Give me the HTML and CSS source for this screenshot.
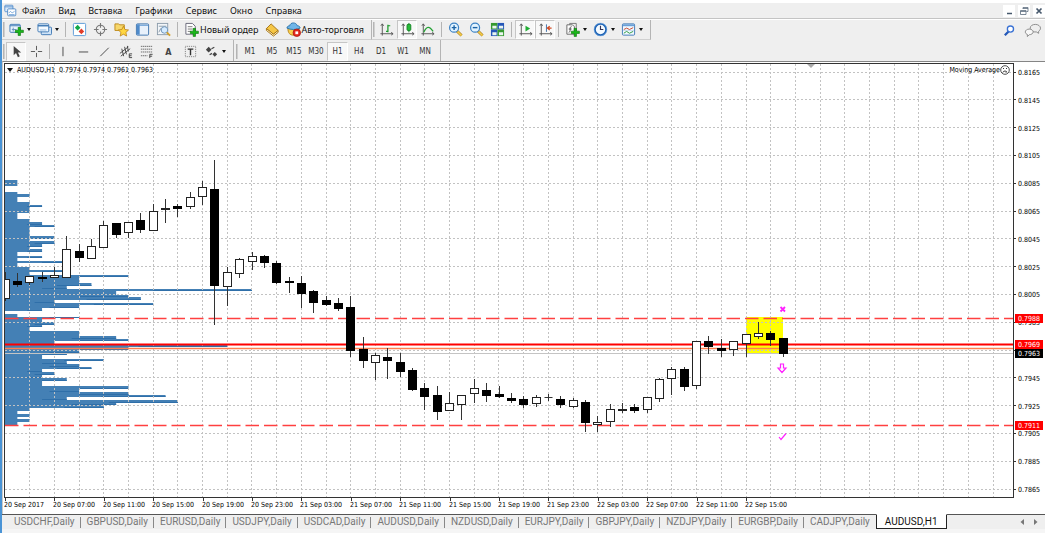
FILE: index.html
```html
<!DOCTYPE html>
<html lang="ru">
<head>
<meta charset="utf-8">
<title>AUDUSD,H1</title>
<link rel="stylesheet" href="styles.css">
</head>
<body>
<svg class="sprite" aria-hidden="true">
  <symbol id="plus" viewBox="0 0 16 16"><path d="M6 1h4v5h5v4h-5v5H6v-5H1V6h5z" fill="#18b818" stroke="#087008"/></symbol>
  <symbol id="i-app" viewBox="0 0 16 16"><rect x="1" y="1.500" width="10" height="8" rx="1" fill="#dcebfa" stroke="#4a86c8"/><path d="M1 3.500h10" stroke="#4a86c8"/><rect x="4.500" y="6" width="10" height="8.500" rx="1" fill="#fff" stroke="#3f7cc0"/><path d="M6 11l2-2 2 2 3-2M6 13h7" stroke="#6a9fd6" fill="none"/></symbol>
  <symbol id="i-newchart" viewBox="0 0 16 16"><rect x="1" y="2.500" width="11" height="8.500" rx="1" fill="#e8f3fd" stroke="#3d78b4"/><path d="M1 4h11" stroke="#3d78b4"/><path d="M3 8h5M4.500 6v4" stroke="#6b93bd"/><use href="#plus" x="6" y="5" width="10" height="10"/></symbol>
  <symbol id="i-profiles" viewBox="0 0 16 16"><rect x="4.500" y="5.500" width="11" height="8" rx="1" fill="#cfe3f7" stroke="#3d78b4"/><rect x="1" y="2" width="11.500" height="8.500" rx="1" fill="#f4faff" stroke="#3d78b4"/><path d="M1 4h11.500" stroke="#3d78b4" stroke-width="1.500"/><path d="M3 8.500h7" stroke="#8db6de"/></symbol>
  <symbol id="i-market" viewBox="0 0 16 16"><rect x="1.500" y="1.500" width="13" height="13" rx="1" fill="#fff" stroke="#5a9bd8"/><path d="M6 3l3 3-3 3-3-3z" fill="#12a84a"/><path d="M10 7l3 3-3 3-3-3z" fill="#e23c28"/></symbol>
  <symbol id="i-target" viewBox="0 0 16 16"><circle cx="8" cy="8" r="4.500" fill="none" stroke="#777" stroke-width="1.200"/><path d="M8 1v5M8 10v5M1 8h5M10 8h5" stroke="#777" stroke-width="1.200"/></symbol>
  <symbol id="i-nav" viewBox="0 0 16 16"><path d="M1 2h4l1 1h5v6H1z" fill="#f6d76b" stroke="#bd8a1c"/><path d="M10 4.500l1.700 3.500 3.800.5-2.800 2.600.8 3.900-3.500-2-3.400 2 .8-3.900-2.800-2.600 3.800-.5z" fill="#ffd640" stroke="#b87e14" stroke-width=".8"/></symbol>
  <symbol id="i-term" viewBox="0 0 16 16"><rect x="1.500" y="2" width="13" height="12" rx="1" fill="#e8f1fb" stroke="#3e74ae"/><rect x="2" y="2.500" width="3" height="11" fill="#4f8bcb"/><path d="M2 3.500h12" stroke="#5a94d0"/></symbol>
  <symbol id="i-tester" viewBox="0 0 16 16"><rect x="1.500" y="1.500" width="11" height="12" fill="#f3f6f9" stroke="#8c9cab"/><path d="M3 4.500h8M3 11l2-4 2 4" stroke="#8c9cab" fill="none"/><circle cx="9" cy="8.500" r="3.500" fill="#d5ebff" stroke="#6f94ba"/><path d="M11.500 11l3.500 3.500" stroke="#d2a02c" stroke-width="2"/></symbol>
  <symbol id="i-order" viewBox="0 0 16 16"><path d="M2 1.500h7l3 3V13H2z" fill="#fff" stroke="#667"/><path d="M4 5h5M4 7.500h5M4 10h4" stroke="#777"/><use href="#plus" x="6" y="6" width="10" height="10"/></symbol>
  <symbol id="i-meta" viewBox="0 0 16 16"><path d="M6.500 2L14 9l-5 4-7.500-6z" fill="#f5c646" stroke="#a4710f"/><path d="M1.500 7v2L9 15l5-4V9l-5 4z" fill="#fff3cd" stroke="#a4710f"/></symbol>
  <symbol id="i-auto" viewBox="0 0 16 16"><path d="M2 6c0 6 2 8 6 8s6-2 6-8z" fill="#f7cf50" stroke="#b98318"/><path d="M1 6.500C1 4.500 3 4 4 4c.5-4 7-4 8 0 2 0 3 1 3 2.500-4 2-10 2-14 0z" fill="#6fb5e8" stroke="#2a72ad"/><circle cx="11.500" cy="11.500" r="4" fill="#e3281c" stroke="#a81510" stroke-width=".8"/><rect x="10" y="10" width="3" height="3" fill="#fff"/></symbol>
  <symbol id="axes" viewBox="0 0 16 16"><path d="M3.500 2v12.500M1.500 12.500H15M2 4l1.500-2L5 4M13 11l2 1.500-2 1.500" fill="none" stroke="#555"/></symbol>
  <symbol id="i-bars" viewBox="0 0 16 16"><use href="#axes"/><path d="M9.500 3v8M7.500 10h2M9.500 4h2.500" stroke="#189a28" stroke-width="1.300"/></symbol>
  <symbol id="i-candles" viewBox="0 0 16 16"><use href="#axes"/><path d="M9.500 1v10" stroke="#148224"/><rect x="7.500" y="2.500" width="4" height="6.500" rx="1" fill="#26bd38" stroke="#148224"/></symbol>
  <symbol id="i-line" viewBox="0 0 16 16"><use href="#axes"/><path d="M4 11c3-7 6-7 10-1" fill="none" stroke="#22a032" stroke-width="1.300"/></symbol>
  <symbol id="lens" viewBox="0 0 16 16"><path d="M9.500 9.500l5 5" stroke="#a97918" stroke-width="3"/><path d="M10 10l4.500 4.500" stroke="#f3cc4b" stroke-width="1.700"/><circle cx="6.500" cy="6" r="4.800" fill="#e1f3ff" stroke="#3c82c4" stroke-width="1.300"/></symbol>
  <symbol id="i-zin" viewBox="0 0 16 16"><use href="#lens"/><path d="M4 6h5M6.500 3.500v5" stroke="#1b62a5" stroke-width="1.500"/></symbol>
  <symbol id="i-zout" viewBox="0 0 16 16"><use href="#lens"/><path d="M4 6h5" stroke="#1b62a5" stroke-width="1.500"/></symbol>
  <symbol id="i-tile" viewBox="0 0 16 16"><rect x="1" y="1" width="7" height="7" fill="#35992e"/><rect x="8" y="1" width="7" height="7" fill="#2456b8"/><rect x="1" y="8" width="7" height="7" fill="#2456b8"/><rect x="8" y="8" width="7" height="7" fill="#35992e"/><path d="M2.500 4H7v3H2.500zM9.500 4H14v3H9.500zM2.500 11H7v3H2.500zM9.500 11H14v3H9.500z" fill="#e9f5ef"/></symbol>
  <symbol id="i-scroll" viewBox="0 0 16 16"><use href="#axes"/><path d="M8 4l5 3-5 3z" fill="#20ae34"/></symbol>
  <symbol id="i-shift" viewBox="0 0 16 16"><use href="#axes"/><path d="M9 2.500v8" stroke="#3b6ea8"/><path d="M14.500 6.500H11M12.500 4.500l-2.500 2 2.500 2" fill="none" stroke="#d24a22" stroke-width="1.300"/></symbol>
  <symbol id="i-ind" viewBox="0 0 16 16"><path d="M5 1.500h7v8H5z" fill="#eee" stroke="#777"/><path d="M2 3h6l2 2v8H2z" fill="#fff" stroke="#666"/><path d="M7 5c-1.500 0-1.500 1-1.500 3S5 11 4 11M4 7.500h3" fill="none" stroke="#444"/><use href="#plus" x="6" y="6" width="10" height="10"/></symbol>
  <symbol id="i-clock" viewBox="0 0 16 16"><circle cx="8" cy="8" r="6" fill="#f4faff" stroke="#1f63b4" stroke-width="2"/><circle cx="8" cy="8" r="6.800" fill="none" stroke="#7db1e8" stroke-width=".6"/><path d="M8 4v4h3" fill="none" stroke="#335" stroke-width="1.200"/></symbol>
  <symbol id="i-tpl" viewBox="0 0 16 16"><rect x="1.500" y="2" width="13" height="12" rx="1" fill="#f1f8ff" stroke="#3e78b6"/><path d="M2 3.500h12" stroke="#6aa0d8" stroke-width="2"/><path d="M3 8l3-1.500L9 8l4-2" fill="none" stroke="#c8452c"/><path d="M3 12l3-2 3 2 4-2" fill="none" stroke="#299a3c"/><path d="M2 9h12" stroke="#a5c4e2" stroke-width=".5"/></symbol>
  <symbol id="i-search" viewBox="0 0 16 16"><path d="M7 9l-4 4" stroke="#2458b8" stroke-width="2.400"/><circle cx="9" cy="6.500" r="3.300" fill="#fff" stroke="#3a72d4" stroke-width="1.400"/></symbol>
  <symbol id="i-chat" viewBox="0 0 18 16"><path d="M11.500 1.500c3 0 5.500 1.800 5.500 4 0 1.500-1 2.700-2 3.300V11l-2.500-1.500c-4 .5-6.500-1.500-6.500-4s2.500-4 5.500-4z" fill="#eee" stroke="#888"/><path d="M5 6.500c2.300 0 4.200 1.300 4.200 3s-2 3-4.200 3L3 14.500v-2.300c-1.200-.4-2.200-1.300-2.200-2.700 0-1.700 1.900-3 4.200-3z" fill="#f7f7f7" stroke="#888"/></symbol>
  <symbol id="i-cursor" viewBox="0 0 16 16"><path d="M5 2v10l2.500-2.500L9.500 14l2-1-2-4H13z" fill="#444"/></symbol>
  <symbol id="i-cross" viewBox="0 0 16 16"><path d="M8 2v4.500M8 9.500V14M2 8h4.500M9.500 8H14" stroke="#555"/></symbol>
  <symbol id="i-v" viewBox="0 0 16 16"><path d="M8.500 3v10" stroke="#444"/></symbol>
  <symbol id="i-h" viewBox="0 0 16 16"><path d="M3 8.500h10" stroke="#444"/></symbol>
  <symbol id="i-t" viewBox="0 0 16 16"><path d="M3.500 13l9-9" stroke="#444"/></symbol>
  <symbol id="i-chan" viewBox="0 0 16 16"><path d="M2 10l9-7M3 13l10-8M4 5l2 8M7 3l2 8M10 2l1 6" stroke="#444" fill="none"/><path d="M15 10.500h-3v4h3M12 12.500h2.500" fill="none" stroke="#333" stroke-width=".9"/></symbol>
  <symbol id="i-fib" viewBox="0 0 16 16"><path d="M2 2.500h12M2 5.500h12M2 8.500h12M2 12.500h7" stroke="#666" stroke-dasharray="1.500 .6"/><path d="M14.500 11h-3v4M11.500 13H14" fill="none" stroke="#333" stroke-width=".9"/></symbol>
  <symbol id="i-label" viewBox="0 0 16 16"><rect x="2.500" y="2.500" width="11" height="11" fill="none" stroke="#777" stroke-dasharray="1 1"/><path d="M5 5.500h6M8 5v7" stroke="#333" stroke-width="1.500"/></symbol>
  <symbol id="i-arrows" viewBox="0 0 16 16"><path d="M5 3l3 3-3 3-3-3z" fill="#444"/><path d="M11.500 8.500l2.500 2.500-2.500 2.500L9 11z" fill="#444"/><path d="M8 5l3-1.500M6 11.500L8.500 10" stroke="#444" stroke-width="1.300"/></symbol>
</svg>

<div class="terminal">
  <nav class="menu">
    <svg class="icon small"><use href="#i-app"/></svg>
    <button>Файл</button><button>Вид</button><button>Вставка</button><button>Графики</button><button>Сервис</button><button>Окно</button><button>Справка</button>
    <div class="window-controls">
      <button aria-label="Свернуть"><svg viewBox="0 0 12 12"><path d="M4 8.500h5" stroke="#46586c" stroke-width="1.500"/></svg></button>
      <button aria-label="Восстановить"><svg viewBox="0 0 12 12"><path d="M5 4V2.500h5v4H8.500M5 3.500h5M2.500 5.500h5.500v4H2.500zM2.500 6.500h5.500" fill="none" stroke="#5c6c7e" stroke-width=".8"/></svg></button>
      <button aria-label="Закрыть"><svg viewBox="0 0 12 12"><path d="M3.500 3.500l5 5M8.500 3.500l-5 5" stroke="#46586c" stroke-width="1.700"/></svg></button>
    </div>
  </nav>

  <div class="toolbar">
    <div class="group">
      <i class="grip"></i>
      <button class="drop" aria-label="Новый график"><svg class="icon"><use href="#i-newchart"/></svg></button>
      <button class="drop" aria-label="Профили"><svg class="icon"><use href="#i-profiles"/></svg></button>
      <i class="sep"></i>
      <button aria-label="Обзор рынка"><svg class="icon"><use href="#i-market"/></svg></button>
      <button aria-label="Окно данных"><svg class="icon"><use href="#i-target"/></svg></button>
      <button aria-label="Навигатор"><svg class="icon"><use href="#i-nav"/></svg></button>
      <button aria-label="Терминал"><svg class="icon"><use href="#i-term"/></svg></button>
      <button aria-label="Тестер"><svg class="icon"><use href="#i-tester"/></svg></button>
      <i class="sep"></i>
      <button class="text"><svg class="icon"><use href="#i-order"/></svg>Новый ордер</button>
      <button aria-label="Редактор"><svg class="icon"><use href="#i-meta"/></svg></button>
      <button class="text"><svg class="icon"><use href="#i-auto"/></svg>Авто-торговля</button>
    </div>
    <div class="group">
      <i class="grip"></i>
      <button aria-label="Бары"><svg class="icon"><use href="#i-bars"/></svg></button>
      <button class="pressed" aria-label="Свечи"><svg class="icon"><use href="#i-candles"/></svg></button>
      <button aria-label="Линия"><svg class="icon"><use href="#i-line"/></svg></button>
      <i class="sep"></i>
      <button aria-label="Увеличить"><svg class="icon"><use href="#i-zin"/></svg></button>
      <button aria-label="Уменьшить"><svg class="icon"><use href="#i-zout"/></svg></button>
      <button aria-label="Окна мозаикой"><svg class="icon"><use href="#i-tile"/></svg></button>
      <i class="sep"></i>
      <button class="pressed" aria-label="Автопрокрутка"><svg class="icon"><use href="#i-scroll"/></svg></button>
      <button class="pressed" aria-label="Сдвиг графика"><svg class="icon"><use href="#i-shift"/></svg></button>
      <i class="sep"></i>
      <button class="drop" aria-label="Индикаторы"><svg class="icon"><use href="#i-ind"/></svg></button>
      <button class="drop" aria-label="Периоды"><svg class="icon"><use href="#i-clock"/></svg></button>
      <button class="drop" aria-label="Шаблоны"><svg class="icon"><use href="#i-tpl"/></svg></button>
    </div>
    <div class="tools-right">
      <button aria-label="Поиск"><svg class="icon"><use href="#i-search"/></svg></button>
      <button aria-label="Чат"><svg class="icon wide"><use href="#i-chat"/></svg></button>
    </div>
  </div>

  <div class="toolbar drawing">
    <div class="group">
      <i class="grip"></i>
      <button class="pressed" aria-label="Курсор"><svg class="icon"><use href="#i-cursor"/></svg></button>
      <button aria-label="Перекрестие"><svg class="icon"><use href="#i-cross"/></svg></button>
      <i class="sep"></i>
      <button aria-label="Вертикальная линия"><svg class="icon"><use href="#i-v"/></svg></button>
      <button aria-label="Горизонтальная линия"><svg class="icon"><use href="#i-h"/></svg></button>
      <button aria-label="Трендовая линия"><svg class="icon"><use href="#i-t"/></svg></button>
      <button aria-label="Канал"><svg class="icon"><use href="#i-chan"/></svg></button>
      <button aria-label="Фибоначчи"><svg class="icon"><use href="#i-fib"/></svg></button>
      <button class="letter">A</button>
      <button aria-label="Метка"><svg class="icon"><use href="#i-label"/></svg></button>
      <button class="drop" aria-label="Стрелки"><svg class="icon"><use href="#i-arrows"/></svg></button>
    </div>
    <div class="group periods">
      <i class="grip"></i>
      <button>M1</button><button>M5</button><button>M15</button><button>M30</button><button class="pressed">H1</button><button>H4</button><button>D1</button><button>W1</button><button>MN</button>
    </div>
  </div>

  <main class="chart">
    <div class="plot">
      <svg id="plot"></svg>
      <div class="legend">
        <span><i class="caret"></i>AUDUSD,H1&nbsp; 0.7974 0.7974 0.7961 0.7963</span>
        <span>Moving Average<svg class="face" viewBox="0 0 10 10"><circle cx="5" cy="5" r="4.300" fill="none" stroke="#222" stroke-width=".8"/><path d="M3 3.500h1M6 3.500h1M3 7.200c1-1.600 3-1.600 4 0" fill="none" stroke="#222" stroke-width=".9"/></svg></span>
      </div>
    </div>
    <svg id="prices"></svg>
    <svg id="times"></svg>
  </main>

  <footer class="tabs">
    <button>USDCHF,Daily</button><button>GBPUSD,Daily</button><button>EURUSD,Daily</button><button>USDJPY,Daily</button><button>USDCAD,Daily</button><button>AUDUSD,Daily</button><button>NZDUSD,Daily</button><button>EURJPY,Daily</button><button>GBPJPY,Daily</button><button>NZDJPY,Daily</button><button>EURGBP,Daily</button><button class="last">CADJPY,Daily</button><button class="active">AUDUSD,H1</button>
    <div class="tab-nav">
      <button aria-label="Назад"><svg viewBox="0 0 6 8"><path d="M5 1v6L1.500 4z" fill="#777"/></svg></button>
      <button aria-label="Вперёд"><svg viewBox="0 0 6 8"><path d="M1 1v6l3.500-3z" fill="#777"/></svg></button>
    </div>
  </footer>
</div>
<script src="chart.js"></script>
</body>
</html>
```
FILE: styles.css
```css
* { box-sizing: border-box; }
body {
  margin: 0;
  color: #111;
  font: 9px/12px "DejaVu Sans Condensed", "Noto Sans", sans-serif;
}
button {
  display: flex;
  align-items: center;
  justify-content: center;
  padding: 0;
  border: 0;
  background: none;
  color: inherit;
  font: inherit;
  white-space: nowrap;
}
.sprite { position: absolute; width: 0; height: 0; }
.icon { width: 15px; height: 15px; flex: none; }
.icon.small { width: 13px; height: 13px; }
.icon.wide { width: 18px; }

.terminal {
  display: flex;
  flex-direction: column;
  min-height: 100vh;
  padding-top: 3px;
  border-left: 2px solid #4a94d6;
  background: linear-gradient(#fff 520px, #f5f5f5 520px);
}

.menu {
  display: flex;
  align-items: center;
  gap: 13px;
  height: 16px;
  padding-left: 2px;
  background: #efefef;
  border-bottom: 1px solid #c4c4c4;
  font-family: "Noto Sans", sans-serif;
}
.menu .icon { margin-right: -8px; }
.window-controls { display: flex; gap: 3px; margin-left: auto; }
.window-controls button { width: 12px; height: 12px; background: #fff; }
.window-controls svg { width: 12px; height: 12px; }

.toolbar {
  display: flex;
  height: 20px;
  margin-top: 1px;
  background: #efefef;
}
.toolbar.drawing { margin-top: 0; height: 21px; }
.group {
  display: flex;
  align-items: center;
  padding-right: 4px;
  border-right: 1px solid #b4b4b4;
  border-bottom: 1px solid #d0d0d0;
}
.group button { width: 21px; height: 19px; }
.group .drop { width: 28px; gap: 3px; }
.drop::after, .caret {
  content: "";
  border: solid transparent;
  border-width: 3px 2px 0;
  border-top-color: #111;
}
.group .text { width: auto; margin: 0 3px; gap: 1px; font-family: "Noto Sans", sans-serif; }
.group .pressed { width: 20px; background: #f8f8f8; border: 1px solid #c6c6c6; border-right-color: #fff; border-bottom-color: #fff; }
.group .letter { width: 23px; font-weight: bold; color: #444; }
.grip { width: 2px; height: 15px; margin: 0 1px; border-left: 1px solid #b4b4b4; border-right: 1px solid #d0d0d0; }
.sep { width: 1px; height: 15px; margin: 0 3px; background: #b4b4b4; }
.drawing .group { padding-top: 2px; border-bottom: 0; }
.drawing .sep { margin: 0 2px; }
.drawing .periods { margin-left: 1px; font-size: 8px; color: #333; }
.periods button { width: 22px; padding-top: 1px; }
.periods .pressed { width: 21px; }
.tools-right { display: flex; gap: 7px; margin-left: auto; padding-right: 3px; }

.chart {
  display: grid;
  grid-template: auto 16px / 1fr 31px;
  padding-left: 2px;
  padding-top: 1px;
  border-top: 1px solid #858585;
  border-left: 1px solid #c9c9c9;
  color: #000;
  font-size: 7px;
}
.chart svg { display: block; }
.plot { position: relative; margin-left: -1px; border: 1px solid #333; }
#plot { width: 100%; height: 433px; }
#prices { width: 31px; height: 435px; }
#times { grid-column: 1 / -1; width: 100%; height: 16px; overflow: visible; }
.legend {
  position: absolute;
  inset: 0 3px auto 2px;
  display: flex;
  justify-content: space-between;
  line-height: 12px;
}
.legend span { display: flex; align-items: center; }
.legend .caret { margin-right: 4px; border-width: 4px 3px 0; }
.face { width: 10px; height: 10px; }

.histogram { fill: #4480b5; }
.histogram .edge { fill: #2f6fa9; }
.grid { stroke: #c2c2c2; stroke-dasharray: 2 2; }
.level { stroke: #ff4040; stroke-dasharray: 13.5 5; stroke-width: 1.3; }
.base { stroke: #ff0000; stroke-width: 1.8; }
.mid { stroke: #ff7f50; stroke-width: 1.5; }
.bid { stroke: #c4c4c4; }
.zone { fill: #ffff00; }
.wick { stroke: #333; }
.up { fill: #fff; stroke: #222; }
.down { fill: #000; stroke: #000; }
.mark { fill: none; stroke: #ff20ff; stroke-width: 1.2; }
.mark.bold { stroke-width: 1.8; }
.axis { fill: #000; }
.tick { stroke: #333; }
.tag { fill: #ff0000; }
.tag.current { fill: #000; }
.tag-text { fill: #fff; }

.tabs {
  display: flex;
  align-items: center;
  height: 15px;
  padding-left: 6px;
  background: #efefef;
  border-top: 1px solid #555;
  color: #777;
  font: 10px/12px Roboto, "Noto Sans", sans-serif;
}
.tabs > button { padding: 0 5px 0 6px; border-right: 1px solid #888; height: 11px; }
.tabs > .last { border-right-color: transparent; }
.tabs > .active {
  height: 15px;
  margin-top: -1px;
  padding: 0 8px;
  background: #fff;
  border: 1px solid #222;
  border-top-color: #fff;
  color: #111;
}
.tab-nav { display: flex; gap: 8px; margin-left: auto; padding-right: 6px; }
.tab-nav svg { width: 6px; height: 8px; }
```
FILE: chart.js
```js
const NS = "http://www.w3.org/2000/svg";
const STEP = 12.35;
const FIRST_X = 5;
const TOP_PRICE_Y = 72;
const ROW = 27.8;

function add(parent, tag, attrs, text) {
  const el = document.createElementNS(NS, tag);
  for (const key in attrs) el.setAttribute(key, attrs[key]);
  if (text) el.textContent = text;
  parent.appendChild(el);
  return el;
}

// [top, bottom, length in bars]
const volumes = [
  [180,186,1],[192,194,1],[194,197,2],[197,202,1],[202,205,2],[205,207,3],[207,213,2],[213,219,1],
  [219,222,2],[222,225,3],[225,227,4],[227,236,2],[236,239,4],[239,241,2],[241,244,4],[244,247,3],
  [247,249,2],[249,252,3],[252,256,1],[256,258,3],[258,261,1],[261,263,5],[263,267,1],[267,270,2],
  [270,272,5],[272,275,2],[275,277,10],[277,283,6],[283,286,7],[286,289,5],[289,291,20],[291,295,9],
  [295,297,10],[297,300,11],[300,303,4],[303,305,12],[305,308,6],[308,311,3],[314,317,1],[317,318,6],
  [318,322,3],[322,325,4],[325,327,3],[327,331,2],[331,336,6],[336,339,9],[339,341,10],[341,345,4],
  [345,347,18],[347,350,10],[350,353,6],[353,355,5],[355,359,3],[359,361,8],[361,364,5],[364,367,6],
  [367,369,7],[369,372,3],[372,375,4],[375,378,3],[378,381,5],[381,386,3],[386,389,10],[389,392,6],
  [392,395,10],[395,397,13],[397,400,5],[400,403,14],[403,405,9],[405,408,8],[408,411,2],[411,414,1],
  [414,417,2],[417,419,1],[419,422,2],[422,425,1]
];

// [high, low, body top, body bottom, is down]
const candles = [
  [272,300,279,298,0],[273,286,281,284,1],[276,284,276,282,0],[272,281,277,278,1],[267,277,275,277,0],
  [236,277,249,277,0],[244,261,251,257,1],[239,258,246,258,0],[221,247,225,247,0],[223,237,223,234,1],
  [222,237,222,232,0],[213,232,220,229,1],[204,230,211,230,0],[199,222,208,209,0],[204,216,206,208,1],
  [192,208,197,206,0],[181,204,187,196,0],[160,324,189,285,1],[267,305,272,286,0],[258,277,259,273,0],
  [252,269,256,261,0],[255,267,256,262,1],[261,283,263,282,1],[277,292,281,282,1],[276,307,283,293,1],
  [290,312,291,302,1],[296,305,300,304,1],[298,310,303,308,1],[296,356,307,350,1],[337,367,349,360,1],
  [353,379,355,362,0],[348,378,357,360,1],[353,376,362,371,1],[368,390,370,389,1],[383,409,388,396,1],
  [386,419,395,411,1],[392,410,403,410,0],[395,419,395,404,0],[379,402,388,393,0],[383,401,390,395,1],
  [386,397,394,396,1],[393,402,398,400,1],[396,407,399,404,1],[395,406,397,403,0],[394,400,397,397,1],
  [396,407,399,404,1],[398,407,400,406,0],[400,431,402,422,1],[416,431,422,424,0],[404,426,409,421,0],
  [403,412,409,410,0],[404,412,407,410,1],[397,412,397,409,0],[378,401,379,398,0],[367,394,369,378,0],
  [367,390,369,386,1],[341,388,341,385,0],[336,353,341,346,1],[339,356,348,350,1],[341,355,341,349,0],
  [334,356,334,343,0],[322,338,333,336,0],[331,345,333,339,1],[338,356,338,353,1]
];

const times = ["20 Sep 2017","20 Sep 07:00","20 Sep 11:00","20 Sep 15:00","20 Sep 19:00","20 Sep 23:00",
  "21 Sep 03:00","21 Sep 07:00","21 Sep 11:00","21 Sep 15:00","21 Sep 19:00","21 Sep 23:00",
  "22 Sep 03:00","22 Sep 07:00","22 Sep 11:00","22 Sep 15:00"];

const plot = add(document.getElementById("plot"), "g", { transform: "translate(-5 -64)" });
const snap = v => Math.round(v) + 0.5;

add(plot, "rect", { class: "zone", x: 746, y: 317, width: 37, height: 36 });

const histogram = add(plot, "g", { class: "histogram" });
for (const [y0, y1, n] of volumes) {
  add(histogram, "rect", { x: FIRST_X, y: y0, width: n * STEP, height: y1 - y0 });
  if (n > 2 && y1 - y0 < 4) add(histogram, "rect", { class: "edge", x: FIRST_X + n * STEP * 0.6, y: y1 - 1, width: n * STEP * 0.4, height: 1 });
}

for (let k = 0; k < 16; k++) {
  const y = snap(TOP_PRICE_Y - 0.5 + k * ROW);
  add(plot, "line", { class: "grid", x1: 5, x2: "150%", y1: y, y2: y });
}
for (let x = FIRST_X + 2 * STEP; x < 4000; x += 2 * STEP) {
  add(plot, "line", { class: "grid", x1: snap(x - 0.5), x2: snap(x - 0.5), y1: 64, y2: 497 });
}

for (const [name, y] of [["level", 318.5], ["level", 425.5], ["bid", 353.5], ["mid", 348.5], ["base", 344.5]]) {
  add(plot, "line", { class: name, x1: 5, x2: "150%", y1: y, y2: y });
}

candles.forEach(([high, low, top, bottom, down], i) => {
  const x = snap(FIRST_X + i * STEP - 0.5);
  add(plot, "line", { class: "wick", x1: x, x2: x, y1: high, y2: low + 1 });
  if (top === bottom) add(plot, "line", { class: "wick", x1: x - 4, x2: x + 4, y1: top + 0.5, y2: top + 0.5 });
  else add(plot, "rect", { class: down ? "down" : "up", x: x - 4, y: top + 0.5, width: 8, height: bottom - top });
});

add(plot, "path", { class: "mark bold", d: "M780.500 307l4.500 4.500M785 307l-4.500 4.500" });
add(plot, "path", { class: "mark", d: "M780.500 364h3v4h2.500l-4 4.500-4-4.500h2.500z" });
add(plot, "path", { class: "mark", d: "M779 437l2 2.500 5-6" });
add(plot, "path", { fill: "#aaa", d: "M807 64h8l-4 4z" });

const prices = add(document.getElementById("prices"), "g", { transform: "translate(0 -63)" });
for (let k = 0; k < 16; k++) {
  const y = TOP_PRICE_Y + k * ROW;
  add(prices, "line", { class: "tick", x1: 0, x2: 2, y1: snap(y - 0.5), y2: snap(y - 0.5) });
  if (k !== 10) add(prices, "text", { class: "axis", x: 4, y: Math.round(y + 3) }, (0.8165 - k * 0.002).toFixed(4));
}
for (const [y, value, kind] of [[318, "0.7988", ""], [344, "0.7969", ""], [353, "0.7963", " current"], [425, "0.7911", ""]]) {
  add(prices, "rect", { class: "tag" + kind, x: 1, y: y - 4, width: 28, height: 9 });
  add(prices, "text", { class: "tag-text", x: 4, y: y + 3 }, value);
}

const timeAxis = document.getElementById("times");
times.forEach((label, i) => {
  const x = i * 4 * STEP;
  add(timeAxis, "line", { class: "tick", x1: snap(x), x2: snap(x), y1: 0, y2: 3 });
  add(timeAxis, "text", { class: "axis", x: Math.round(x - 1), y: 9 }, label);
});
```
